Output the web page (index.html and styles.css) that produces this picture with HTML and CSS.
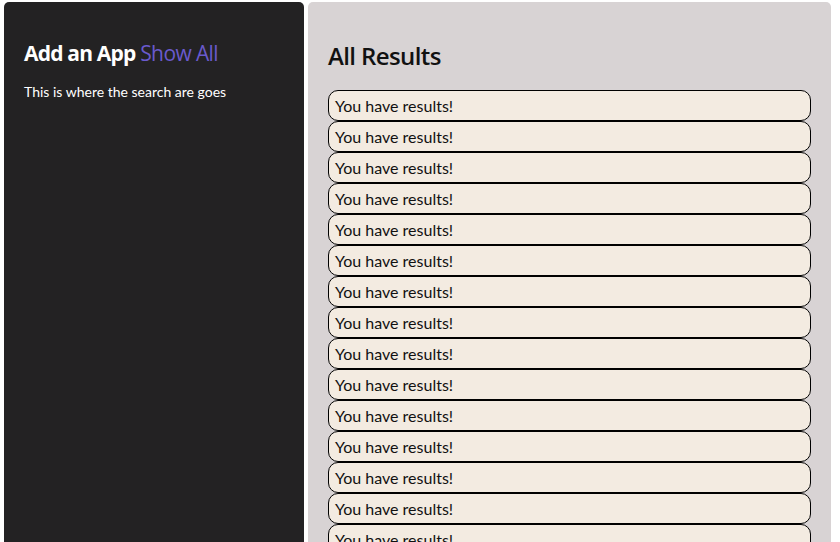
FILE: index.html
```html
<!DOCTYPE html>
<html>
<head>
<meta charset="utf-8">
<link rel="stylesheet" href="styles.css">
</head>
<body>
<div class="layout">
  <aside class="side">
    <h2 class="side-title">Add an App <span class="show-all">Show All</span></h2>
    <p class="side-text">This is where the search are goes</p>
  </aside>
  <main class="results">
    <h1 class="results-title">All Results</h1>
    <ul class="result-list">
      <li class="result">You have results!</li>
      <li class="result">You have results!</li>
      <li class="result">You have results!</li>
      <li class="result">You have results!</li>
      <li class="result">You have results!</li>
      <li class="result">You have results!</li>
      <li class="result">You have results!</li>
      <li class="result">You have results!</li>
      <li class="result">You have results!</li>
      <li class="result">You have results!</li>
      <li class="result">You have results!</li>
      <li class="result">You have results!</li>
      <li class="result">You have results!</li>
      <li class="result">You have results!</li>
      <li class="result">You have results!</li>
      <li class="result">You have results!</li>
    </ul>
  </main>
</div>
</body>
</html>
```

FILE: styles.css
```css
html, body {
  margin: 0;
  padding: 0;
  background: #ffffff;
  overflow: hidden;
  height: 100%;
}
body {
  font-family: "Lato", "Open Sans", sans-serif;
}
.layout {
  display: flex;
  gap: 4px;
  padding: 2px 9px 0 4px;
  height: 100%;
  box-sizing: border-box;
}
.side {
  width: 300px;
  flex: none;
  background: #232223;
  border-radius: 5px 5px 0 0;
  padding: 38px 20px 0 20px;
  box-sizing: border-box;
  color: #ffffff;
}
.side-title {
  margin: 0;
  font-family: "Open Sans", sans-serif;
  font-weight: 700;
  font-size: 21px;
  letter-spacing: -0.8px;
  line-height: 26px;
}
.show-all {
  color: #6a5acd;
  font-weight: 500;
  letter-spacing: -0.6px;
}
.side-text {
  margin: 17px 0 0 0;
  font-size: 14px;
  line-height: 17px;
}
.results {
  flex: 1;
  background: #d8d3d4;
  border-radius: 5px 5px 0 0;
  padding: 40px 20px 0 20px;
  box-sizing: border-box;
}
.results-title {
  margin: 0 0 20px 0;
  font-family: "Open Sans", sans-serif;
  font-weight: 600;
  font-size: 24px;
  letter-spacing: -0.6px;
  line-height: 28px;
  color: #111111;
}
.result-list {
  list-style: none;
  margin: 0;
  padding: 0;
}
.result {
  background: #f3ebe1;
  border: 1px solid #000000;
  border-radius: 10px;
  padding: 5px 6px;
  font-size: 16px;
  line-height: 19px;
  color: #111111;
}
```
